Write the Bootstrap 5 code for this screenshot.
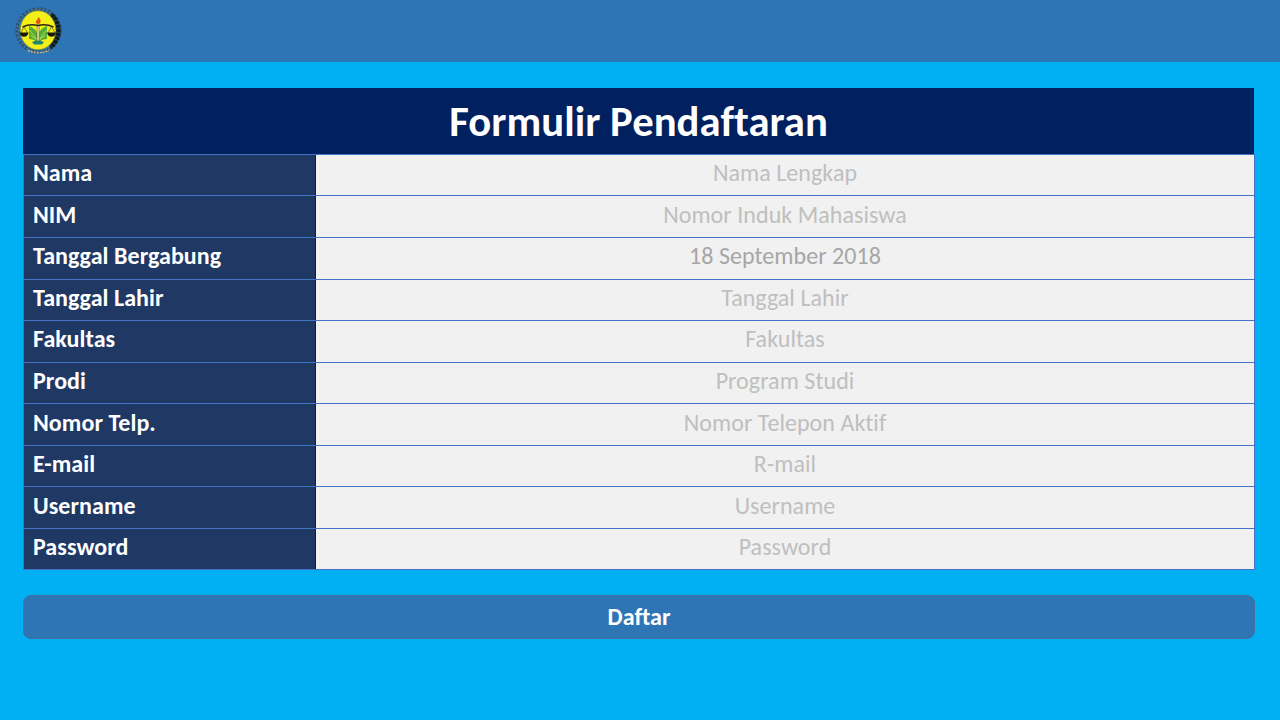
<!DOCTYPE html>
<html lang="id">
<head>
<meta charset="utf-8">
<meta name="viewport" content="width=device-width, initial-scale=1">
<title>Formulir Pendaftaran</title>
<link href="https://cdn.jsdelivr.net/npm/bootstrap@5.3.0/dist/css/bootstrap.min.css" rel="stylesheet">
<style>
body{background:#00b0f3;font-family:Calibri,Carlito,Lato,sans-serif;font-size:24px;line-height:1.2;min-height:100vh;font-variant-ligatures:none}
.topbar{background:#2e75b6;height:62px;padding:0 0 0 15px}
.page{padding:26px 25px 0 23px}
.form-title{background:#002060;color:#fff;height:65.9px;margin-right:1px;font-size:42.67px;font-weight:700;letter-spacing:.05px;padding-top:1px}
.sheet{border:solid #4472c4;border-width:0 1px 1px}
.line{height:41.55px;border-top:1px solid #4472c4}
.line-label{width:292px;background:#203864;color:#fff;font-weight:700;padding:0 0 3px 9px;border-right:1px solid #101c32;letter-spacing:.06px}
.line-field{background:#f1f1f1;border:0;outline:0;text-align:center;color:#a6a6a6;padding:0 0 3px;min-width:0;font-variant-ligatures:none;letter-spacing:.05px}
.line-field::placeholder{color:#bfbfbf;opacity:1}
.btn-daftar,.btn-daftar:hover{background:#2e75b6;border:1px solid #41719c;color:#fff;height:44px;margin-top:24.6px;border-radius:8px;font-size:24px;font-weight:700;line-height:1.2;padding:0;font-variant-ligatures:none}
</style>
</head>
<body>
<nav class="topbar d-flex align-items-center">
<svg width="48" height="48" viewBox="0 0 48 48" aria-label="Logo">
<g fill="none" stroke="#2c3c48">
<circle cx="23.5" cy="23.5" r="21.6" stroke-width="3" stroke-dasharray="2.4 1.4" opacity=".8"/>
<circle cx="23.5" cy="23.5" r="21.6" stroke="#8b98a0" stroke-width="1" stroke-dasharray="1.2 2.6"/>
<path d="M36 8A20.5 20.5 0 0 1 35 40" stroke="#111c1c" stroke-width="5" stroke-dasharray="3.4 .5"/>
<path d="M13 43.5Q24 48 34 43.5" stroke="#c0b68a" stroke-width="1.6" stroke-dasharray="2 1"/>
</g>
<ellipse cx="23" cy="23.3" rx="17.8" ry="19.5" fill="#f5ef19" stroke="#8b8d24" stroke-width=".7"/>
<path d="M14 19Q20 21 23 27Q26 21 32 19V32Q27 32 23 36Q19 32 14 32Z" fill="#55ad35"/>
<path d="M14.5 23l7 9m-6-4l6 5M31.5 23l-7 9m6-4l-6 5" stroke="#b4d84c" stroke-width="1"/>
<path d="M17 35l6-2 6 2-2 2.5h-8Z" fill="#168a74"/>
<path d="M22 18h2.2v16H22z" fill="#e9e8a2" stroke="#68602a" stroke-width=".6"/>
<path d="M23.5 10Q27 13.5 24.8 16.8H21.8Q19.5 14.5 22.2 12.8Z" fill="#e4571b"/>
<path d="M7.5 20Q15 16.5 23 18.5Q31 16.5 38.5 20" fill="none" stroke="#292a12" stroke-width="1.5"/>
<path d="M9 19.5L6 26M9 19.5L12.5 26M36.5 19.5L33 26M36.5 19.5L40 26" stroke="#53541c" stroke-width=".7"/>
<path d="M4.5 25.5H13.5Q12.5 29.8 9 29.8T4.5 25.5M32 25.5H41Q40 29.8 36.5 29.8T32 25.5" fill="#171b10"/>
</svg>
</nav>
<main class="page">
<h1 class="form-title d-flex align-items-center justify-content-center mb-0">Formulir Pendaftaran</h1>
<form>
<div class="sheet">
<div class="line d-flex"><label for="f1" class="line-label d-flex align-items-center flex-shrink-0">Nama</label><input id="f1" class="line-field flex-grow-1" placeholder="Nama Lengkap"></div>
<div class="line d-flex"><label for="f2" class="line-label d-flex align-items-center flex-shrink-0">NIM</label><input id="f2" class="line-field flex-grow-1" placeholder="Nomor Induk Mahasiswa"></div>
<div class="line d-flex"><label for="f3" class="line-label d-flex align-items-center flex-shrink-0">Tanggal Bergabung</label><input id="f3" class="line-field flex-grow-1" value="18 September 2018"></div>
<div class="line d-flex"><label for="f4" class="line-label d-flex align-items-center flex-shrink-0">Tanggal Lahir</label><input id="f4" class="line-field flex-grow-1" placeholder="Tanggal Lahir"></div>
<div class="line d-flex"><label for="f5" class="line-label d-flex align-items-center flex-shrink-0">Fakultas</label><input id="f5" class="line-field flex-grow-1" placeholder="Fakultas"></div>
<div class="line d-flex"><label for="f6" class="line-label d-flex align-items-center flex-shrink-0">Prodi</label><input id="f6" class="line-field flex-grow-1" placeholder="Program Studi"></div>
<div class="line d-flex"><label for="f7" class="line-label d-flex align-items-center flex-shrink-0">Nomor Telp.</label><input id="f7" class="line-field flex-grow-1" placeholder="Nomor Telepon Aktif"></div>
<div class="line d-flex"><label for="f8" class="line-label d-flex align-items-center flex-shrink-0">E-mail</label><input id="f8" class="line-field flex-grow-1" placeholder="R-mail"></div>
<div class="line d-flex"><label for="f9" class="line-label d-flex align-items-center flex-shrink-0">Username</label><input id="f9" class="line-field flex-grow-1" placeholder="Username"></div>
<div class="line d-flex"><label for="f10" class="line-label d-flex align-items-center flex-shrink-0">Password</label><input id="f10" class="line-field flex-grow-1" placeholder="Password"></div>
</div>
<button type="button" class="btn btn-daftar w-100">Daftar</button>
</form>
</main>
<script src="https://cdn.jsdelivr.net/npm/bootstrap@5.3.0/dist/js/bootstrap.bundle.min.js"></script>
</body>
</html>
